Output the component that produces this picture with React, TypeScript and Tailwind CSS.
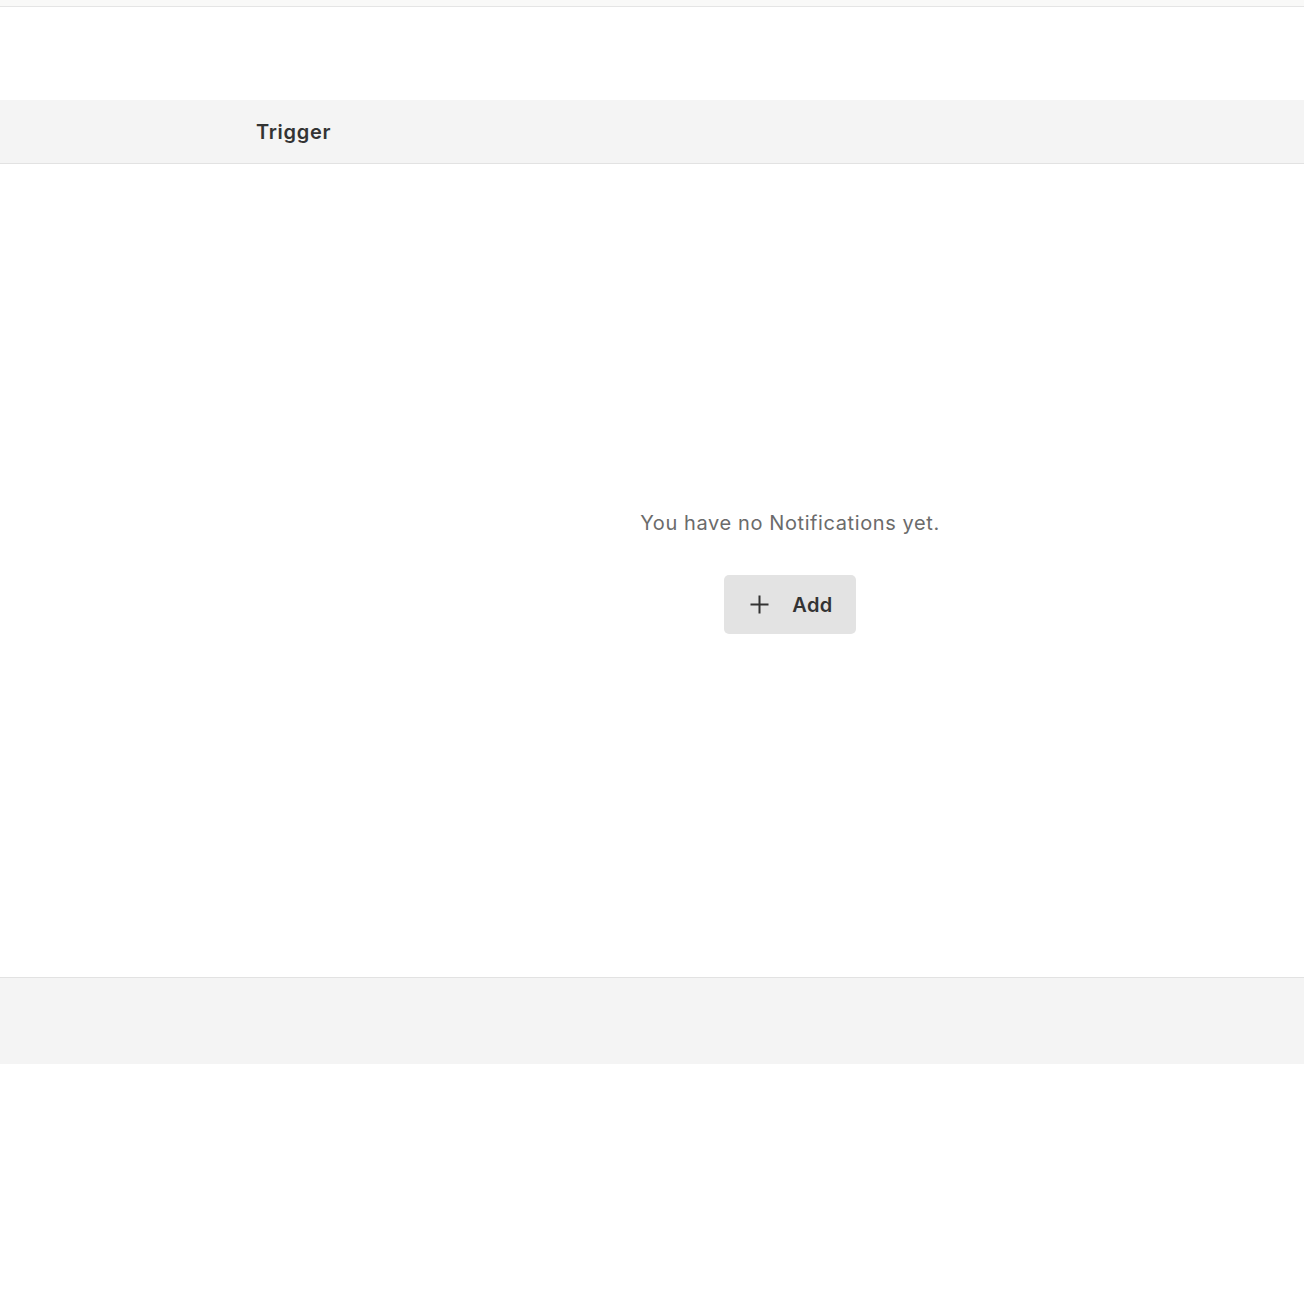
import React from "react";

export default function App() {
  return (
    <div className="w-[1304px] h-[1294px] bg-white flex flex-col" style={{ fontFamily: "Inter, 'Noto Sans', sans-serif" }}>
      <div className="h-[6px] bg-[#f9f9f8] border-b border-[#e5e5e5] box-content" />
      <div className="h-[93px]" />
      <div className="h-[63px] bg-[#f4f4f4] border-b border-[#e2e2e2] box-content flex items-center pl-[256px]">
        <span className="text-[20px] font-semibold text-[#333333] tracking-[0.7px]">Trigger</span>
      </div>
      <div className="h-[813px] flex flex-col items-center justify-center pl-[276px] pt-[2px]">
        <p className="text-[20px] text-[#6b6b6b] leading-[28px] tracking-[0.6px]">You have no Notifications yet.</p>
        <button className="mt-[38px] w-[132px] h-[59px] rounded-[5px] bg-[#e3e3e3] flex items-center justify-center gap-[22px] pl-[2px]">
          <svg width="21" height="21" viewBox="0 0 21 21" fill="none" stroke="#333" strokeWidth="2">
            <path d="M10.5 1.5v18M1.5 10.5h18" />
          </svg>
          <span className="text-[20px] font-semibold text-[#333333] tracking-[0.4px]">Add</span>
        </button>
      </div>
      <div className="h-[86px] bg-[#f4f4f4] border-t border-[#e2e2e2] box-content" />
      <div className="flex-1" />
    </div>
  );
}
